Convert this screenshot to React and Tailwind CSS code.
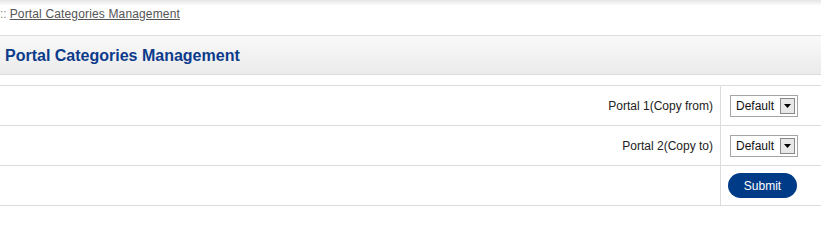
export default function App() {
  const font = { fontFamily: '"Liberation Sans", Arial, sans-serif' };
  return (
    <div className="w-[821px] h-[220px] bg-white relative overflow-hidden" style={font}>
      <div className="absolute top-0 left-0 right-0 h-[6px] bg-gradient-to-b from-[#e6e6e6] to-white" />
      <div className="relative pt-[5px] pl-0 h-[35px] text-[12px] text-[#666] flex items-start">
        <span className="text-[#888] mr-[3px]">::</span>
        <a className="underline text-[#555] tracking-[0.15px]" href="#">Portal Categories Management</a>
      </div>
      <div className="h-[40px] border-y border-[#dcdcdc] bg-gradient-to-b from-[#f9f9f9] to-[#ebebeb] flex items-center pl-[5px]">
        <span className="text-[16px] font-bold text-[#0c3b8c] pt-[2px]">Portal Categories Management</span>
      </div>
      <div className="mt-[10px] border-t border-[#dcdcdc] text-[12px]">
        <div className="flex h-[40px] border-b border-[#dcdcdc]">
          <div className="w-[721px] border-r border-[#dcdcdc] flex items-center justify-end pr-[7px] text-[#222]">Portal 1(Copy from)</div>
          <div className="flex items-center pl-[9px]">
            <Select />
          </div>
        </div>
        <div className="flex h-[40px] border-b border-[#dcdcdc]">
          <div className="w-[721px] border-r border-[#dcdcdc] flex items-center justify-end pr-[7px] text-[#222]">Portal 2(Copy to)</div>
          <div className="flex items-center pl-[9px]">
            <Select />
          </div>
        </div>
        <div className="flex h-[40px] border-b border-[#dcdcdc]">
          <div className="w-[721px] border-r border-[#dcdcdc]" />
          <div className="flex items-center pl-[7px]">
            <button className="w-[69px] h-[25px] rounded-full bg-[#003b88] text-white text-[12px]">Submit</button>
          </div>
        </div>
      </div>
    </div>
  );
}

function Select() {
  return (
    <div className="w-[68px] h-[22px] border border-[#a5a5a5] flex items-center justify-between pl-[5px] pr-[2px] bg-white text-[12px] text-[#111]">
      <span>Default</span>
      <span className="w-[15px] h-[16px] border border-[#888] bg-[#e8e8e8] flex items-center justify-center">
        <svg width="7" height="4" viewBox="0 0 7 4"><path d="M0 0h7L3.5 4z" fill="#000" /></svg>
      </span>
    </div>
  );
}
